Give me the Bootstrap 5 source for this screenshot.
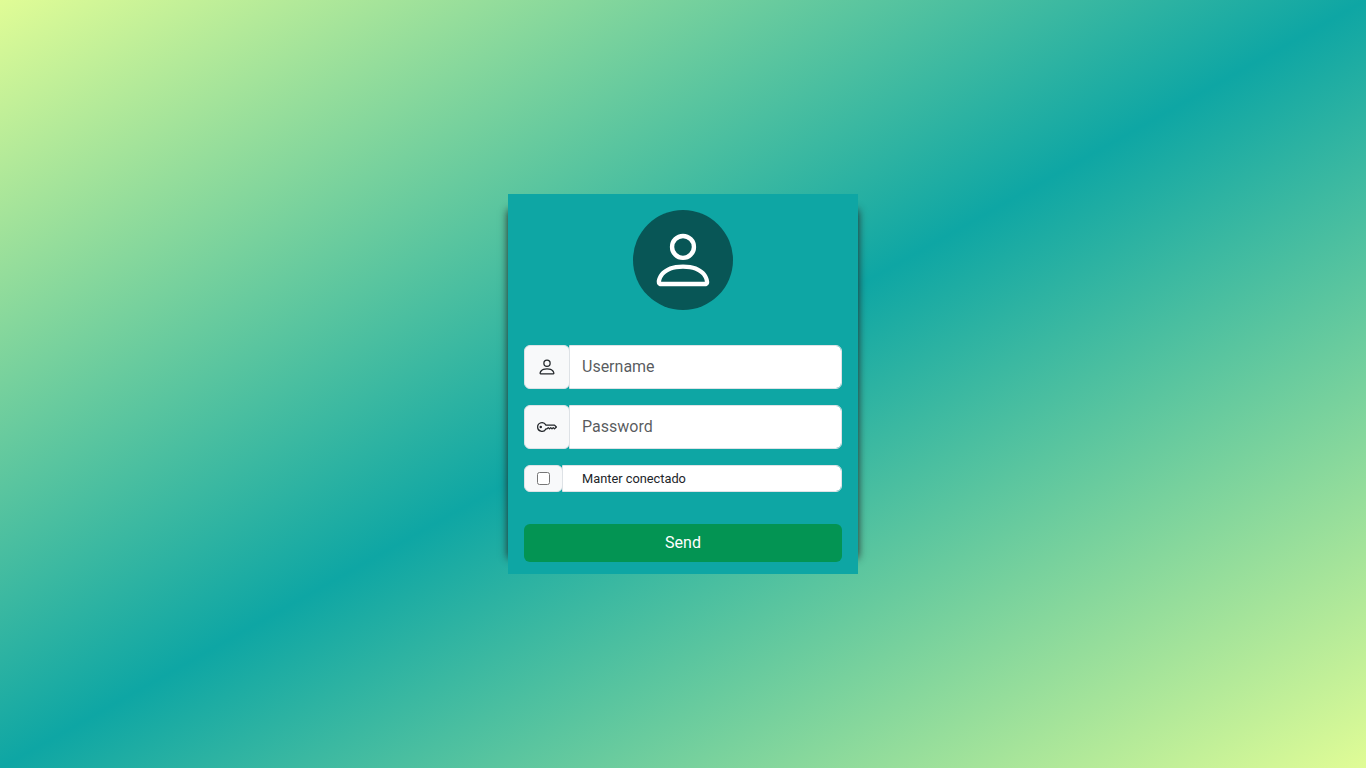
<!DOCTYPE html>
<html lang="pt-BR">
<head>
<meta charset="utf-8">
<meta name="viewport" content="width=device-width, initial-scale=1">
<title>Login</title>
<link href="https://cdn.jsdelivr.net/npm/bootstrap@5.3.0/dist/css/bootstrap.min.css" rel="stylesheet">
<style>
body{font-family:Roboto,sans-serif;background:linear-gradient(to bottom right,#e0fc96,#0ea6a4,#e0fc96)}
.login-box{width:350px;height:380px;padding:16px 16px 12px;background:#0ea6a4;box-shadow:16px 0 8px -16px #222,-16px 0 8px -16px #222}
.avatar{width:100px;height:100px;background:#085656;margin-bottom:35px}
.remember{height:27px;font-size:.8rem;line-height:1.5}
.remember .form-control{font-size:.8rem;padding:3px 19px;min-height:0}
.remember .input-group-text{padding:0 12px}
.remember input{width:13px;height:13px;margin:0}
.btn-send,.btn-send:hover{background:#039453;color:#fff}
</style>
</head>
<body>
<svg class="d-none" xmlns="http://www.w3.org/2000/svg">
<symbol id="person" viewBox="0 0 16 16"><path d="M8 8a3 3 0 1 0 0-6 3 3 0 0 0 0 6zm2-3a2 2 0 1 1-4 0 2 2 0 0 1 4 0zm4 8c0 1-1 1-1 1H3s-1 0-1-1 1-4 6-4 6 3 6 4zm-1-.004c-.001-.246-.154-.986-.832-1.664C11.516 10.68 10.289 10 8 10c-2.29 0-3.516.68-4.168 1.332-.678.678-.83 1.418-.832 1.664h10z"/></symbol>
<symbol id="key" viewBox="0 0 16 16"><path d="M0 8a4 4 0 0 1 7.465-2H14a.5.5 0 0 1 .354.146l1.5 1.5a.5.5 0 0 1 0 .708l-1.5 1.5a.5.5 0 0 1-.708 0L13 9.207l-.646.647a.5.5 0 0 1-.708 0L11 9.207l-.646.647a.5.5 0 0 1-.708 0L9 9.207l-.646.647A.5.5 0 0 1 8 10h-.535A4 4 0 0 1 0 8zm4-3a3 3 0 1 0 2.712 4.285A.5.5 0 0 1 7.163 9h.63l.853-.854a.5.5 0 0 1 .708 0l.646.647.646-.647a.5.5 0 0 1 .708 0l.646.647.646-.647a.5.5 0 0 1 .708 0l.646.647.793-.793-1-1h-6.63a.5.5 0 0 1-.451-.285A3 3 0 0 0 4 5z"/><path d="M4 8a1 1 0 1 1-2 0 1 1 0 0 1 2 0z"/></symbol>
</svg>
<main class="vh-100 d-flex justify-content-center align-items-center">
<form class="login-box d-flex flex-column">
<div class="avatar rounded-circle text-white d-flex align-items-center justify-content-center align-self-center flex-shrink-0">
<svg width="70" height="70" fill="currentColor"><use href="#person"/></svg>
</div>
<div class="input-group mb-3">
<span class="input-group-text bg-light rounded"><svg width="20" height="30" fill="currentColor"><use href="#person"/></svg></span>
<input type="text" class="form-control" placeholder="Username" aria-label="Username">
</div>
<div class="input-group mb-3">
<span class="input-group-text bg-light rounded"><svg width="20" height="30" fill="currentColor"><use href="#key"/></svg></span>
<input type="password" class="form-control" placeholder="Password" aria-label="Password">
</div>
<div class="input-group remember flex-shrink-0">
<span class="input-group-text bg-light rounded"><input type="checkbox" id="keep"></span>
<label class="form-control" for="keep">Manter conectado</label>
</div>
<button type="button" class="btn btn-send mt-auto w-100 flex-shrink-0">Send</button>
</form>
</main>
<script src="https://cdn.jsdelivr.net/npm/bootstrap@5.3.0/dist/js/bootstrap.bundle.min.js"></script>
</body>
</html>
